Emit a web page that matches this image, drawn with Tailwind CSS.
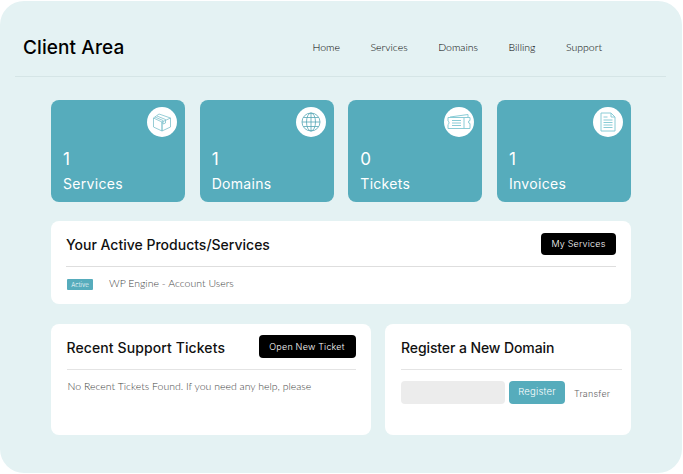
<!DOCTYPE html>
<html lang="en">
<head>
    <meta charset="UTF-8">
    <meta name="viewport" content="width=device-width, initial-scale=1.0">
    <title>Client Area</title>
    <script src="https://cdn.jsdelivr.net/npm/@tailwindcss/browser@4"></script>
</head>
<body class="bg-white font-['Inter',sans-serif] overflow-hidden">
    <div class="mt-px w-[682px] h-[472px] bg-[#e4f2f3] rounded-[24px]">
        <!-- top bar -->
        <header class="mx-[15px] w-[651px] h-[76px] border-b border-[#d5e5e6] flex items-center pl-2 pr-[64px] pt-[18px] justify-between">
            <h1 class="mt-[2px] text-[19px] font-medium text-black tracking-[0.1px]">Client Area</h1>
            <nav class="flex gap-[30.500px] font-['Lato',sans-serif] font-light text-[10.500px] text-black">
                <a>Home</a>
                <a>Services</a>
                <a>Domains</a>
                <a>Billing</a>
                <a>Support</a>
            </nav>
        </header>

        <main class="ml-[51px] w-[580px] pt-[23px]">
            <!-- stat cards -->
            <div class="grid grid-cols-4 gap-[14.6px]">
                <div class="h-[102px] bg-[#56acbc] rounded-lg relative pl-3 pt-[49px] text-white">
                    <span class="absolute top-[7px] right-[8px] w-[30px] h-[30px] rounded-full bg-white flex items-center justify-center">
                        <svg width="20" height="20" viewBox="0 0 20 20" fill="none" stroke="#7cc0cc" stroke-width="0.8"><path d="M10 19 1.500 15V6L10 10zM10 19l8.500-4V6L10 10zM1.500 6 7 2l11.500 4M5 4l8.500 3.500v3.500l-2.500 1V8.500L3 5"/></svg>
                    </span>
                    <p class="text-[17px] leading-[20px]">1</p>
                    <p class="text-[14px] leading-[20px] mt-[5px] tracking-[0.3px]">Services</p>
                </div>
                <div class="h-[102px] bg-[#56acbc] rounded-lg relative pl-3 pt-[49px] text-white">
                    <span class="absolute top-[7px] right-[8px] w-[30px] h-[30px] rounded-full bg-white flex items-center justify-center">
                        <svg width="20" height="20" viewBox="0 0 20 20" fill="none" stroke="#56a6b5" stroke-width="0.8"><circle cx="10" cy="10" r="9"/><ellipse cx="10" cy="10" rx="4.500" ry="9"/><path d="M10 1v18M1 10h18M2.500 5.500h15M2.500 14.500h15"/></svg>
                    </span>
                    <p class="text-[17px] leading-[20px]">1</p>
                    <p class="text-[14px] leading-[20px] mt-[5px] tracking-[0.3px]">Domains</p>
                </div>
                <div class="h-[102px] bg-[#56acbc] rounded-lg relative pl-3 pt-[49px] text-white">
                    <span class="absolute top-[7px] right-[8px] w-[30px] h-[30px] rounded-full bg-white flex items-center justify-center">
                        <svg width="24" height="20" viewBox="0 0 24 20" fill="none" stroke="#8accd6" stroke-width="1"><path d="M3 5 21 2.500V5M1 5.500h22v3a1.500 1.500 0 0 0 0 3v5H1v-4a2 2 0 0 0 0-3.500zM17 6v10M5 8.500h9M5 11h9M5 13.500h9"/></svg>
                    </span>
                    <p class="text-[17px] leading-[20px]">0</p>
                    <p class="text-[14px] leading-[20px] mt-[5px] tracking-[0.3px]">Tickets</p>
                </div>
                <div class="h-[102px] bg-[#56acbc] rounded-lg relative pl-3 pt-[49px] text-white">
                    <span class="absolute top-[7px] right-[8px] w-[30px] h-[30px] rounded-full bg-white flex items-center justify-center">
                        <svg width="16" height="20" viewBox="0 0 16 20" fill="none" stroke="#8accd6" stroke-width="1"><path d="M1 1h10l4 4v14H1zM11 1v4h4M3.500 5h4M3.500 8h9M3.500 10.500h9M3.500 13h9M3.500 15.500h9"/></svg>
                    </span>
                    <p class="text-[17px] leading-[20px]">1</p>
                    <p class="text-[14px] leading-[20px] mt-[5px] tracking-[0.3px]">Invoices</p>
                </div>
            </div>

            <!-- active products -->
            <section class="mt-[19px] h-[83px] bg-white rounded-lg px-[15px]">
                <div class="h-[46px] border-b border-[#dedede] flex items-center justify-between">
                    <h2 class="mt-[2px] text-[14px] font-medium text-[#111]">Your Active Products/Services</h2>
                    <button class="mt-px w-[75px] h-[22px] bg-black text-white text-[9px] font-light rounded tracking-[0.2px]">My Services</button>
                </div>
                <div class="h-[34px] flex items-center">
                    <span class="ml-px w-[26px] h-[11px] bg-[#56acbc] text-white text-[6px] font-light rounded-[1px] flex items-center justify-center">Active</span>
                    <span class="ml-[16px] font-['Lato',sans-serif] font-light text-[10.500px] text-[#444]">WP Engine - Account Users</span>
                </div>
            </section>

            <!-- bottom panels -->
            <div class="mt-[20px] flex justify-between">
                <section class="w-[320px] h-[111px] bg-white rounded-lg px-[15.500px]">
                    <div class="h-[46px] border-b border-[#e4e4e4] flex items-center justify-between">
                        <h2 class="mt-[2px] text-[14px] font-medium text-[#111] tracking-[0.1px]">Recent Support Tickets</h2>
                        <button class="w-[97px] h-[23px] bg-black text-white text-[9px] font-light rounded tracking-[0.2px]">Open New Ticket</button>
                    </div>
                    <p class="mt-[9px] ml-px font-['Lato',sans-serif] font-light text-[10.500px] text-[#444]">No Recent Tickets Found. If you need any help, please</p>
                </section>
                <section class="w-[246px] h-[111px] bg-white rounded-lg pl-[16px] pr-[9px]">
                    <div class="h-[46px] border-b border-[#e4e4e4] flex items-center">
                        <h2 class="mt-[2px] text-[14px] font-medium text-[#111] tracking-[-0.1px]">Register a New Domain</h2>
                    </div>
                    <form class="mt-[11px] flex items-center">
                        <input type="text" class="w-[104px] h-[23px] bg-[#ececec] rounded">
                        <button type="button" class="ml-[4px] w-[56px] h-[23px] bg-[#56acbc] text-white text-[9.500px] font-light rounded tracking-[0.2px]">Register</button>
                        <a class="ml-[9px] mt-[2px] text-[9px] font-light text-[#666] tracking-[0.2px]">Transfer</a>
                    </form>
                </section>
            </div>
        </main>
    </div>
</body>
</html>
